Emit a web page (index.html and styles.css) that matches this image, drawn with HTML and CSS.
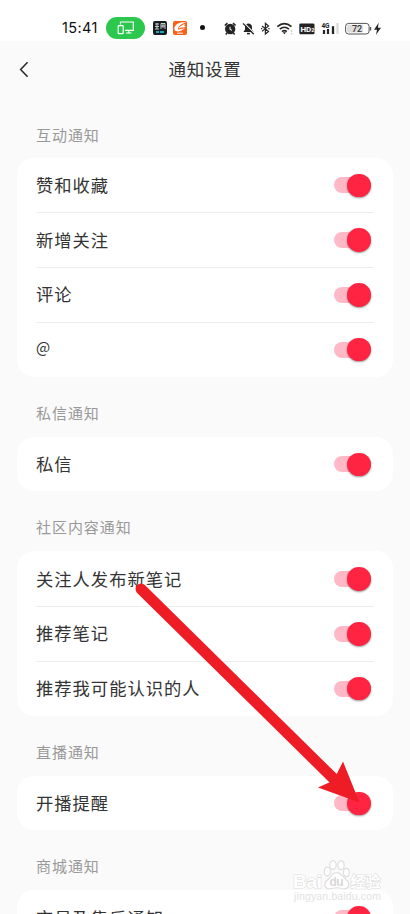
FILE: index.html
```html
<!DOCTYPE html>
<html lang="zh-CN">
<head>
<meta charset="utf-8">
<title>通知设置</title>
<link rel="stylesheet" href="styles.css">
</head>
<body>
<div class="screen">
  <div class="status">
    <span class="clock">15:41</span>
    <span class="cast"><svg width="18" height="14" viewBox="0 0 18 14" fill="none" stroke="#fff" stroke-width="1.2"><path d="M3.5 3.5V1H16.3V9.3H8M9 12H14.5M11.8 9.5V12"/><rect x="1.2" y="4.6" width="5" height="8" rx=".7"/></svg></span>
    <svg class="app-one" width="14" height="14" viewBox="0 0 14 14"><rect width="14" height="14" rx="2" fill="#171d20"/><path d="M2 3H6M2 5.5H6M4 2V8M2 8H6M8 2.5H12V8M8 2.5V8M8 5H12M10 3V7" stroke="#d9e0e0" stroke-width=".9" fill="none"/><path d="M3 11H6M7 11H11" stroke="#18a9bd" stroke-width="2"/></svg>
    <svg class="app-two" width="14" height="14" viewBox="0 0 14 14"><rect width="14" height="14" rx="2" fill="#fa6017"/><path d="M13 1.5C7 .5 2 3 1.3 7.5 1 10 4.5 11.3 8 9.8L12.5 7 8.5 8 5 8.5C5 5.5 8 3 13 1.5Z" fill="#fff"/><path d="M6 7L11.5 3.5 9.5 6 12.5 5.5" stroke="#fff" stroke-width="1.2" fill="none"/><path d="M4 12.2H10" stroke="#fff" stroke-width="1"/></svg>
    <span class="dot"></span>
    <svg class="system" width="160" height="18" viewBox="222 18 160 18">
      <g fill="none" stroke="#242424">
        <circle cx="230.2" cy="28" r="4.5" fill="#242424" stroke-width="1.3"/>
        <path d="M224.8 24.5L227.4 22.2M235.6 24.5L233 22.2M227 32L225.8 33.4M233.4 32L234.6 33.4" stroke-width="1.6"/>
        <path d="M230 25.8V28.4L232 29.3" stroke="#fff" stroke-width="1"/>
        <path d="M243.4 31H253.6L252 28.5V26C252 21.3 245 21.3 245 26V28.5Z" fill="#242424" stroke="none"/>
        <path d="M247 32.6H250" stroke-width="1.5"/>
        <path d="M244.2 22.2L254.6 32.4" stroke="#fff" stroke-width="1.3"/>
        <path d="M243 22.4L253.8 33.2" stroke-width="1.3"/>
        <path d="M262 25L268.5 30.4 265.4 33V22.3L268.5 25 262 30.4M261 27.7H262.3M268.3 27.7H269.6" stroke-width="1.2"/>
        <path d="M277.3 25.6Q284.4 19.5 291.5 25.6M279.8 28.2Q284.4 24.3 289 28.2M282 30.6Q284.4 28.7 286.8 30.6" stroke-width="1.6"/>
        <path d="M282.7 31.2H286.1L284.4 33.2Z" fill="#242424" stroke="none"/>
        <path d="M291.6 29V31M291.6 32V33.5" stroke="#c8c8c8" stroke-width="1.3"/>
        <rect x="299.3" y="22.4" width="15.2" height="10.9" rx="1.3" fill="#242424" stroke="none"/>
        <path d="M324 29V33M328 28V33" stroke-width="2.2"/>
        <path d="M333 25.2V33" stroke-width="2.3"/>
        <path d="M337.5 22V33" stroke="#dadada" stroke-width="2.3"/>
        <rect x="345.6" y="22.4" width="23.5" height="10.6" rx="3" stroke="#555" stroke-width="1"/>
        <rect x="347" y="23.8" width="16" height="7.8" rx="1.5" fill="#dedede" stroke="none"/>
        <path d="M370.5 26V29.5" stroke="#555" stroke-width="1.4"/>
        <path d="M378.7 21.8L374 28.8H377L376 33.7 381 26.7H377.9Z" fill="#242424" stroke="none"/>
      </g>
      <text class="hd" x="300.4" y="30.8">HD<tspan class="sub">2</tspan></text>
      <text class="net" x="321.4" y="26.7">4G</text>
      <text class="charge" x="352" y="31.2">72</text>
    </svg>
  </div>
  <header class="nav">
    <svg class="back" width="10" height="17" viewBox="0 0 10 17" fill="none" stroke="#262626" stroke-width="1.5"><path d="M8.6 1.2L1.6 8.5 8.6 15.8"/></svg>
    <h1>通知设置</h1>
  </header>
  <main>
    <h2>互动通知</h2>
    <section class="card">
      <div class="row"><span>赞和收藏</span><i class="switch"></i></div>
      <div class="row"><span>新增关注</span><i class="switch"></i></div>
      <div class="row"><span>评论</span><i class="switch"></i></div>
      <div class="row"><span class="at">@</span><i class="switch"></i></div>
    </section>
    <h2>私信通知</h2>
    <section class="card">
      <div class="row"><span>私信</span><i class="switch"></i></div>
    </section>
    <h2>社区内容通知</h2>
    <section class="card">
      <div class="row"><span>关注人发布新笔记</span><i class="switch"></i></div>
      <div class="row"><span>推荐笔记</span><i class="switch"></i></div>
      <div class="row"><span>推荐我可能认识的人</span><i class="switch"></i></div>
    </section>
    <h2>直播通知</h2>
    <section class="card">
      <div class="row"><span>开播提醒</span><i class="switch"></i></div>
    </section>
    <h2>商城通知</h2>
    <section class="card">
      <div class="row"><span>交易及售后通知</span><i class="switch"></i></div>
    </section>
  </main>
  <svg class="overlay" width="410" height="914" viewBox="0 0 410 914">
    <g class="mark">
      <text class="bai" x="293" y="887.5" textLength="29">Bai</text>
      <ellipse cx="327.3" cy="871.5" rx="3" ry="4.3"/>
      <ellipse cx="333" cy="865" rx="3.2" ry="4.4"/>
      <ellipse cx="341" cy="865.3" rx="3.2" ry="4.4"/>
      <ellipse cx="346.4" cy="872.5" rx="2.9" ry="4.1"/>
      <path d="M336.5 872.5C332 872.5 331.5 877 328 879.5 322 884 325.5 890 331 888.5 335.5 887.5 339 887.5 342 888.5 349 890 351 884 346 879.5 342.5 877 341.5 872.5 336.5 872.5Z"/>
      <text class="du" x="329.5" y="885.8" textLength="14">du</text>
      <text class="jy" x="350.5" y="887" textLength="30">经验</text>
      <text class="url" x="294" y="900" textLength="87">jingyan.baidu.com</text>
    </g>
    <path d="M141 589L338 783" stroke="#ee1c25" stroke-width="11" stroke-linecap="round"/>
    <path d="M359.5 802.5L343 761.5 335.5 776.5 332.5 781 318 787.5Z" fill="#ee1c25"/>
  </svg>
</div>
</body>
</html>
```
FILE: styles.css
```css
* { box-sizing: border-box; }
body { margin: 0; background: #fafafa; }
.screen {
  position: relative;
  width: 410px;
  height: 914px;
  overflow: hidden;
  background: #fafafa;
  color: #333;
  font-family: "Noto Sans CJK SC", sans-serif;
}
.status {
  display: flex;
  align-items: center;
  height: 41px;
  padding: 14px 0 0 62px;
  background: #fff;
}
.clock {
  width: 44px;
  font: 400 14.5px/20px Inter, sans-serif;
  letter-spacing: .4px;
  color: #111;
}
.cast {
  display: flex;
  align-items: center;
  justify-content: center;
  width: 39px;
  height: 22px;
  border-radius: 11px;
  background: #2cc84d;
}
.app-one { margin-left: 8px; }
.app-two { margin-left: 6px; }
.dot {
  width: 5px;
  height: 5px;
  margin: 0 17.5px 0 12.5px;
  border-radius: 50%;
  background: #111;
}
.system { flex: none; }
.hd { font: 700 8px Roboto, sans-serif; fill: #fff; }
.sub { font-size: 5.5px; }
.net { font: 700 6.5px Roboto, sans-serif; fill: #242424; }
.charge { font: 500 9px Roboto, sans-serif; fill: #333; }
.nav {
  display: grid;
  grid-template-columns: 60px 1fr 60px;
  align-items: center;
  height: 56px;
}
.back { margin-left: 19px; }
h1 {
  margin: 0;
  padding-bottom: 2px;
  text-align: center;
  font-size: 17.5px;
  font-weight: 400;
  letter-spacing: .7px;
}
main { padding: 15.5px 17px 0; }
h2 {
  height: 60px;
  margin: 0;
  padding: 13px 19px 0;
  font-size: 15px;
  line-height: 45px;
  font-weight: 400;
  letter-spacing: .95px;
  color: #999;
}
h2:first-child { height: 45px; padding-top: 0; line-height: 43px; }
.card {
  padding: 0 19px;
  border-radius: 17px;
  background: #fff;
}
.row {
  display: flex;
  align-items: center;
  justify-content: space-between;
  height: 54.75px;
  font-size: 17.3px;
  letter-spacing: 1px;
}
.row span { padding-bottom: 1px; }
.row + .row { background: linear-gradient(#ededed, #ededed) 0 0 / 100% 1px no-repeat; }
.row .at { padding-bottom: 5px; font-size: 15px; }
.switch {
  display: flex;
  align-items: center;
  justify-content: flex-end;
  width: 36.5px;
  height: 16px;
  margin-top: 1px;
  margin-right: 3.5px;
  border-radius: 8px;
  background: #ffb9c6;
}
.switch::before {
  content: "";
  flex: none;
  width: 23.4px;
  height: 23.4px;
  border-radius: 50%;
  background: #ff2442;
  box-shadow: 0 1px 2px rgba(0, 0, 0, .4);
}
.overlay { position: absolute; inset: 0; }
.mark { fill: #fff; stroke: #dedede; stroke-width: 1.2; }
.mark text { paint-order: stroke; }
.bai { font: 700 19px "Liberation Sans", sans-serif; }
.du { font: 700 12px "Liberation Sans", sans-serif; fill: #d8d8d8; stroke: none; }
.jy { font: 700 15px "Noto Sans CJK SC", sans-serif; }
.url { font: 400 10.5px "Liberation Sans", sans-serif; fill: #e2e2e2; stroke: none; }
```
